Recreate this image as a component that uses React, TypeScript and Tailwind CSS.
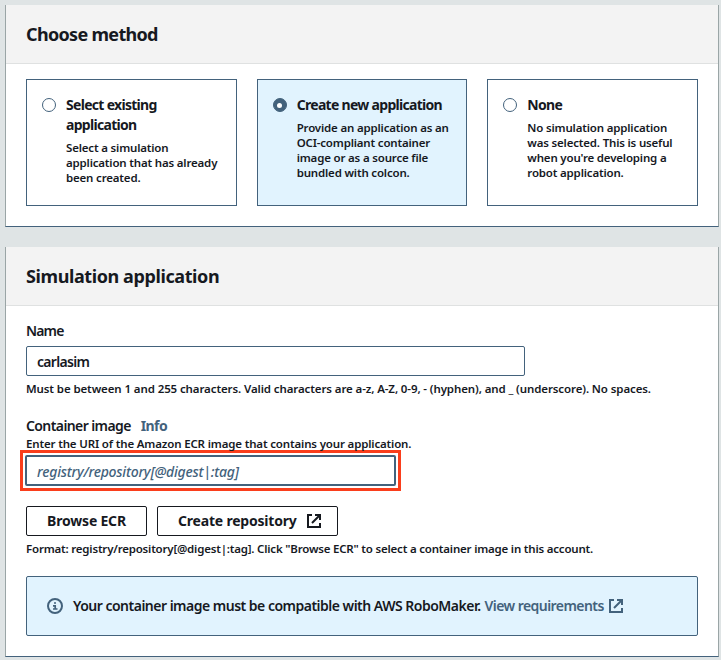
import React from "react";

const small = "text-[11.5px] font-semibold leading-[15px] text-[#16191f]";

function ExternalIcon() {
  return (
    <svg width="14" height="14" viewBox="0 0 14 14" fill="none" stroke="currentColor" strokeWidth="2" className="shrink-0">
      <path d="M5 1H1v12h12V9" />
      <path d="M8 1h5v5M13 1 5 9" />
    </svg>
  );
}

function InfoIcon() {
  return (
    <svg width="16" height="16" viewBox="0 0 16 16" fill="none" stroke="currentColor" strokeWidth="2" className="shrink-0">
      <circle cx="8" cy="8" r="7" />
      <path d="M7 5h2M6 7.8h2.2V11M6 11h4.5" strokeWidth="1.7" />
    </svg>
  );
}

function Header({ children }: { children: React.ReactNode }) {
  return (
    <div className="flex h-[59px] items-center border-b border-[#dfe1e1] bg-[#f3f3f3] pl-5">
      <h2 className="whitespace-nowrap text-[18px] font-bold leading-[22px] text-[#16191f]">{children}</h2>
    </div>
  );
}

function Option({ title, lines, selected }: { title: React.ReactNode; lines: React.ReactNode; selected?: boolean }) {
  return (
    <div className={`flex h-[127px] gap-2.5 border border-[#43627c] pl-[15px] pt-[15px] ${selected ? "bg-[#e1f3fe]" : "bg-white"}`}>
      <span className={`mt-[3px] flex h-3.5 w-3.5 shrink-0 items-center justify-center rounded-full border border-[#43627c] ${selected ? "bg-[#43627c]" : "bg-white"}`}>
        {selected && <span className="h-[5px] w-[5px] rounded-full bg-white" />}
      </span>
      <div className="whitespace-nowrap">
        <div className="text-[14px] font-bold leading-5 tracking-[-0.7px] text-[#16191f]">{title}</div>
        <div className={`mt-[5px] tracking-[-0.18px] ${small}`}>{lines}</div>
      </div>
    </div>
  );
}

export default function App() {
  return (
    <main className="h-[660px] w-[721px] overflow-hidden bg-[#dfe4e5] pl-[5px] pt-[5px] font-['Noto_Sans','Open_Sans',sans-serif]">
      <section className="h-[222px] w-[714px] border-x border-b border-x-[#9aa5a6] border-b-[#43627c] bg-white">
        <Header><span className="tracking-[-0.68px]">Choose method</span></Header>
        <div className="grid grid-cols-3 gap-5 px-5 pt-[15px]">
          <Option
            title={<>Select existing<br />application</>}
            lines={<>Select a simulation<br />application that has already<br />been created.</>}
          />
          <Option
            selected
            title="Create new application"
            lines={<>Provide an application as an<br />OCI-compliant container<br />image or as a source file<br />bundled with colcon.</>}
          />
          <Option
            title="None"
            lines={<>No simulation application<br />was selected. This is useful<br />when you're developing a<br />robot application.</>}
          />
        </div>
      </section>

      <section className="mt-5 h-[410px] w-[714px] border-x border-b border-x-[#9aa5a6] border-b-[#43627c] bg-white">
        <Header><span className="tracking-[-0.4px]">Simulation application</span></Header>
        <div className="whitespace-nowrap px-5 pt-[15px]">
          <div className="text-[14px] font-semibold leading-5 tracking-[-0.85px] text-[#16191f]">Name</div>
          <div className="mt-[5px] flex h-[30px] w-[499px] items-center rounded-[2px] border border-[#43627c] pl-2.5 text-[14px] font-semibold tracking-[-0.7px] text-[#16191f]">carlasim</div>
          <div className={`mt-[5px] tracking-[-0.107px] ${small}`}>Must be between 1 and 255 characters. Valid characters are a-z, A-Z, 0-9, - (hyphen), and _ (underscore). No spaces.</div>

          <div className="mt-5 flex gap-2.5 text-[14px] font-semibold leading-5 tracking-[-0.6px] text-[#16191f]">
            <span>Container image</span>
            <span className="font-bold text-[#43627c]">Info</span>
          </div>
          <div className={`tracking-[-0.16px] ${small}`}>Enter the URI of the Amazon ECR image that contains your application.</div>
          <div className="-ml-1.5 -mt-px h-[41px] w-[381px] border-[3px] border-[#fa3e1c] p-0.5">
            <div className="flex h-full items-center rounded-[2px] border-2 border-[#43627c] pl-2.5 pt-px text-[14px] font-medium italic tracking-[-0.22px] text-[#43627c]">registry/repository[@digest|:tag]</div>
          </div>

          <div className="mt-[15px] flex gap-2.5 text-[14px] font-bold text-[#16191f]">
            <div className="flex h-[30px] w-[121px] items-center justify-center rounded-[2px] border border-[#16191f] pb-0.5 tracking-[-0.2px]">Browse ECR</div>
            <div className="flex h-[30px] w-[181px] items-center justify-between rounded-[2px] border border-[#16191f] pl-5 pr-4 tracking-[-0.2px]"><span className="pb-0.5">Create repository</span><ExternalIcon /></div>
          </div>
          <div className={`mt-[5px] tracking-[-0.2px] ${small}`}>Format: registry/repository[@digest|:tag]. Click "Browse ECR" to select a container image in this account.</div>

          <div className="mt-5 flex h-[60px] items-center rounded-[2px] border border-[#43627c] bg-[#e1f3fe] pl-5 text-[14px] text-[#43627c]">
            <InfoIcon />
            <span className="ml-2.5 pb-0.5 font-semibold tracking-[-0.51px] text-[#16191f]">Your container image must be compatible with AWS RoboMaker.</span>
            <span className="ml-1 mr-[5px] pb-0.5 font-semibold tracking-[-0.56px]">View requirements</span>
            <ExternalIcon />
          </div>
        </div>
      </section>
    </main>
  );
}
